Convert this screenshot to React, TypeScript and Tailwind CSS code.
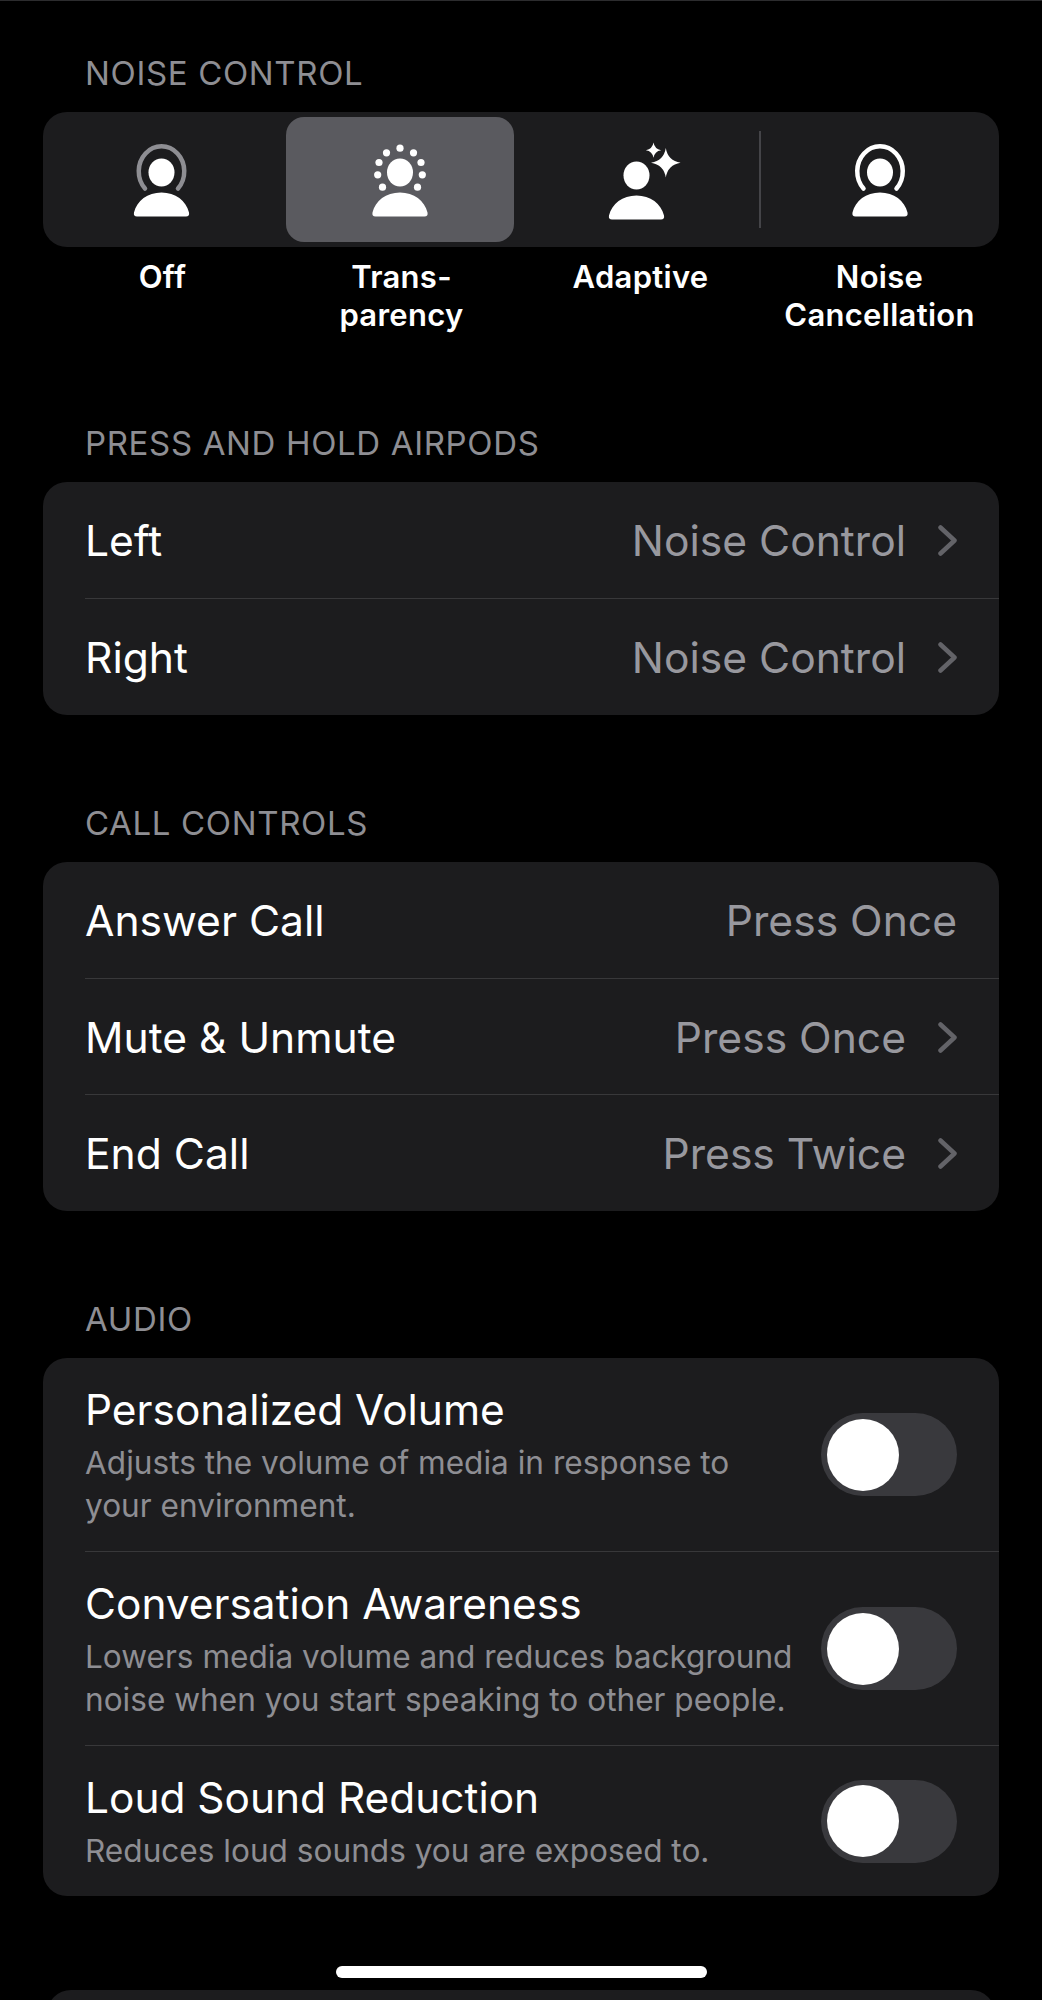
import React from 'react';

const font = { fontFamily: 'Inter, "Noto Sans", sans-serif' };

function Person({ x = 60, dy = 0 }: { x?: number; dy?: number }) {
  return (
    <g fill="#fff">
      <ellipse cx={x} cy={42.5 + dy} rx={13} ry={14} />
      <path
        d={`M${x - 24.5} ${86.5 + dy}h49c2.4 0 3.6-1.6 3-4-2.8-11.8-13.6-20-27.5-20s-24.7 8.2-27.5 20c-.6 2.4.6 4 3 4z`}
      />
    </g>
  );
}

function Star({ x, y, r }: { x: number; y: number; r: number }) {
  const c = r * 0.14;
  return (
    <path
      fill="#fff"
      d={`M${x} ${y - r}Q${x + c} ${y - c} ${x + r} ${y}Q${x + c} ${y + c} ${x} ${y + r}Q${x - c} ${y + c} ${x - r} ${y}Q${x - c} ${y - c} ${x} ${y - r}z`}
    />
  );
}

function ModeIcon({ mode }: { mode: string }) {
  const dots = [
    [0, 18.2], [-13.5, 22.8], [13.5, 22.8], [-21, 32.5], [21, 32.5],
    [-22.3, 44.8], [22.3, 44.8], [-17.5, 57.2], [17.5, 57.2],
  ];
  return (
    <svg width="120" height="100" viewBox="0 0 120 100" className="shrink-0">
      {mode === 'off' && (
        <>
          <path d="M42 58.5A22.75 25 0 1 1 75 58.5" fill="none" stroke="#8e8e93" strokeWidth="4.5" strokeLinecap="round" />
          <Person x={58.5} />
        </>
      )}
      {mode === 'nc' && (
        <>
          <path d="M43.5 58.5A22.75 25 0 1 1 76.5 58.5" fill="none" stroke="#fff" strokeWidth="4.5" strokeLinecap="round" />
          <Person />
        </>
      )}
      {mode === 'transparency' && (
        <>
          {dots.map(([dx, cy], i) => (
            <circle key={i} cx={60 + dx} cy={cy} r={3.6} fill="#fff" />
          ))}
          <Person />
        </>
      )}
      {mode === 'adaptive' && (
        <>
          <Person x={55.5} dy={3} />
          <Star x={84.8} y={32.8} r={14.8} />
          <Star x={72.5} y={20.2} r={7.6} />
        </>
      )}
    </svg>
  );
}

function Chevron() {
  return (
    <svg width="19" height="31" viewBox="0 0 19 31" className="ml-[32px] shrink-0">
      <path d="M2.5 2.5L16.5 15.5L2.5 28.5" fill="none" stroke="#636368" strokeWidth="4.5" strokeLinecap="round" strokeLinejoin="round" />
    </svg>
  );
}

function Header({ children }: { children: React.ReactNode }) {
  return (
    <div className="h-[40px] mb-[19px] pl-[42px] text-[33px] leading-[40px] text-[#8e8e93] tracking-[0.65px]">
      {children}
    </div>
  );
}

function Row({ label, value, chevron = true, first = false, last = false }: { label: string; value: string; chevron?: boolean; first?: boolean; last?: boolean }) {
  return (
    <div className={`ml-[42px] pr-[42px] pt-[2px] flex items-center justify-between ${last ? 'h-[117px]' : 'h-[116px]'} ${first ? '' : 'border-t border-[#38383a]'}`}>
      <span className="text-[42.6px] text-white">{label}</span>
      <span className="flex items-center">
        <span className="text-[42.6px] text-[#98989e]">{value}</span>
        {chevron && <Chevron />}
      </span>
    </div>
  );
}

function Toggle() {
  return (
    <div className="w-[136px] h-[83px] rounded-full bg-[#39393d] flex items-center pl-[6px] shrink-0">
      <div className="w-[72px] h-[72px] rounded-full bg-white" />
    </div>
  );
}

function ToggleRow({ title, desc, height, first = false }: { title: string; desc: string[]; height: string; first?: boolean }) {
  return (
    <div className={`ml-[42px] pr-[42px] flex items-center justify-between ${height} ${first ? '' : 'border-t border-[#38383a]'}`}>
      <div className="self-start pt-[27px]">
        <div className="text-[42.4px] leading-[50px] text-white">{title}</div>
        <div className="mt-[6px] text-[31.6px] leading-[43px] text-[#8e8e93]">
          {desc.map((line) => (
            <div key={line}>{line}</div>
          ))}
        </div>
      </div>
      <Toggle />
    </div>
  );
}

export default function App() {
  const modes = [
    { id: 'off', label: ['Off'] },
    { id: 'transparency', label: ['Trans-', 'parency'] },
    { id: 'adaptive', label: ['Adaptive'] },
    { id: 'nc', label: ['Noise', 'Cancellation'] },
  ];

  return (
    <div className="w-[1042px] h-[2000px] bg-black overflow-hidden relative" style={font}>
      <div className="h-px bg-[#2c2c2e]" />
      <div className="px-[43px] pt-[52px]">
        <Header>NOISE CONTROL</Header>
        <div className="grid grid-cols-4 h-[135px] bg-[#1c1c1e] rounded-[24px]">
          <div className="flex items-center justify-center">
            <ModeIcon mode="off" />
          </div>
          <div className="flex items-center justify-center">
            <div className="w-[228px] h-[125px] -ml-[3px] rounded-[18px] bg-[#5a5a5f] flex items-center justify-center">
              <ModeIcon mode="transparency" />
            </div>
          </div>
          <div className="flex items-center justify-center">
            <ModeIcon mode="adaptive" />
          </div>
          <div className="flex items-center">
            <div className="w-[2px] h-[97px] -ml-[1px] bg-[#444448] shrink-0" />
            <div className="flex-1 flex justify-center">
              <ModeIcon mode="nc" />
            </div>
          </div>
        </div>
        <div className="grid grid-cols-4 mt-[11px] h-[76px] text-center text-[31px] leading-[38px] font-semibold tracking-[0.3px] text-white">
          {modes.map((m) => (
            <div key={m.id}>
              {m.label.map((line) => (
                <div key={line}>{line}</div>
              ))}
            </div>
          ))}
        </div>

        <div className="mt-[89px]">
          <Header>PRESS AND HOLD AIRPODS</Header>
          <div className="bg-[#1c1c1e] rounded-[24px]">
            <Row label="Left" value="Noise Control" first />
            <Row label="Right" value="Noise Control" last />
          </div>
        </div>

        <div className="mt-[88px]">
          <Header>CALL CONTROLS</Header>
          <div className="bg-[#1c1c1e] rounded-[24px]">
            <Row label="Answer Call" value="Press Once" chevron={false} first />
            <Row label="Mute &amp; Unmute" value="Press Once" />
            <Row label="End Call" value="Press Twice" last />
          </div>
        </div>

        <div className="mt-[88px]">
          <Header>AUDIO</Header>
          <div className="bg-[#1c1c1e] rounded-[24px]">
            <ToggleRow
              first
              height="h-[193px]"
              title="Personalized Volume"
              desc={['Adjusts the volume of media in response to', 'your environment.']}
            />
            <ToggleRow
              height="h-[194px]"
              title="Conversation Awareness"
              desc={['Lowers media volume and reduces background', 'noise when you start speaking to other people.']}
            />
            <ToggleRow
              height="h-[151px]"
              title="Loud Sound Reduction"
              desc={['Reduces loud sounds you are exposed to.']}
            />
          </div>
        </div>

        <div className="mt-[94px] mx-[4px] h-[60px] bg-[#1c1c1e] rounded-t-[24px]" />
      </div>
      <div className="absolute left-[336px] top-[1966px] w-[371px] h-[12px] rounded-full bg-white" />
    </div>
  );
}
